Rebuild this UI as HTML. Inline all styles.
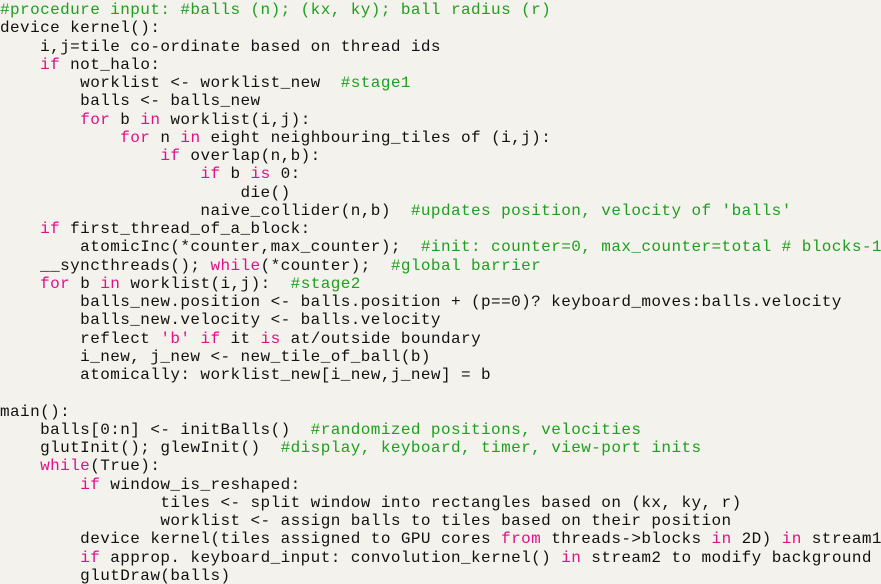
<!DOCTYPE html>
<html><head><meta charset="utf-8"><style>
html,body{margin:0;padding:0;background:#f3f2ec;width:881px;height:584px;overflow:hidden}
pre{margin:0;padding:1px 0 0 0;font-family:"Liberation Mono",monospace;font-size:16px;letter-spacing:0.42px;line-height:18.25px;color:#111}
.c{color:#1f9e1f}.k{color:#e0108a}
</style></head><body><pre><span class="c">#procedure input: #balls (n); (kx, ky); ball radius (r)</span>
device kernel():
    i,j=tile co-ordinate based on thread ids
    <span class="k">if</span> not_halo:
        worklist &lt;- worklist_new  <span class="c">#stage1</span>
        balls &lt;- balls_new
        <span class="k">for</span> b <span class="k">in</span> worklist(i,j):
            <span class="k">for</span> n <span class="k">in</span> eight neighbouring_tiles of (i,j):
                <span class="k">if</span> overlap(n,b):
                    <span class="k">if</span> b <span class="k">is</span> 0:
                        die()
                    naive_collider(n,b)  <span class="c">#updates position, velocity of 'balls'</span>
    <span class="k">if</span> first_thread_of_a_block:
        atomicInc(*counter,max_counter);  <span class="c">#init: counter=0, max_counter=total # blocks-1</span>
    __syncthreads(); <span class="k">while</span>(*counter);  <span class="c">#global barrier</span>
    <span class="k">for</span> b <span class="k">in</span> worklist(i,j):  <span class="c">#stage2</span>
        balls_new.position &lt;- balls.position + (p==0)? keyboard_moves:balls.velocity
        balls_new.velocity &lt;- balls.velocity
        reflect <span class="k">'b'</span> <span class="k">if</span> it <span class="k">is</span> at/outside boundary
        i_new, j_new &lt;- new_tile_of_ball(b)
        atomically: worklist_new[i_new,j_new] = b

main():
    balls[0:n] &lt;- initBalls()  <span class="c">#randomized positions, velocities</span>
    glutInit(); glewInit()  <span class="c">#display, keyboard, timer, view-port inits</span>
    <span class="k">while</span>(True):
        <span class="k">if</span> window_is_reshaped:
                tiles &lt;- split window into rectangles based on (kx, ky, r)
                worklist &lt;- assign balls to tiles based on their position
        device kernel(tiles assigned to GPU cores <span class="k">from</span> threads-&gt;blocks <span class="k">in</span> 2D) <span class="k">in</span> stream1
        <span class="k">if</span> approp. keyboard_input: convolution_kernel() <span class="k">in</span> stream2 to modify background
        glutDraw(balls)</pre></body></html>
